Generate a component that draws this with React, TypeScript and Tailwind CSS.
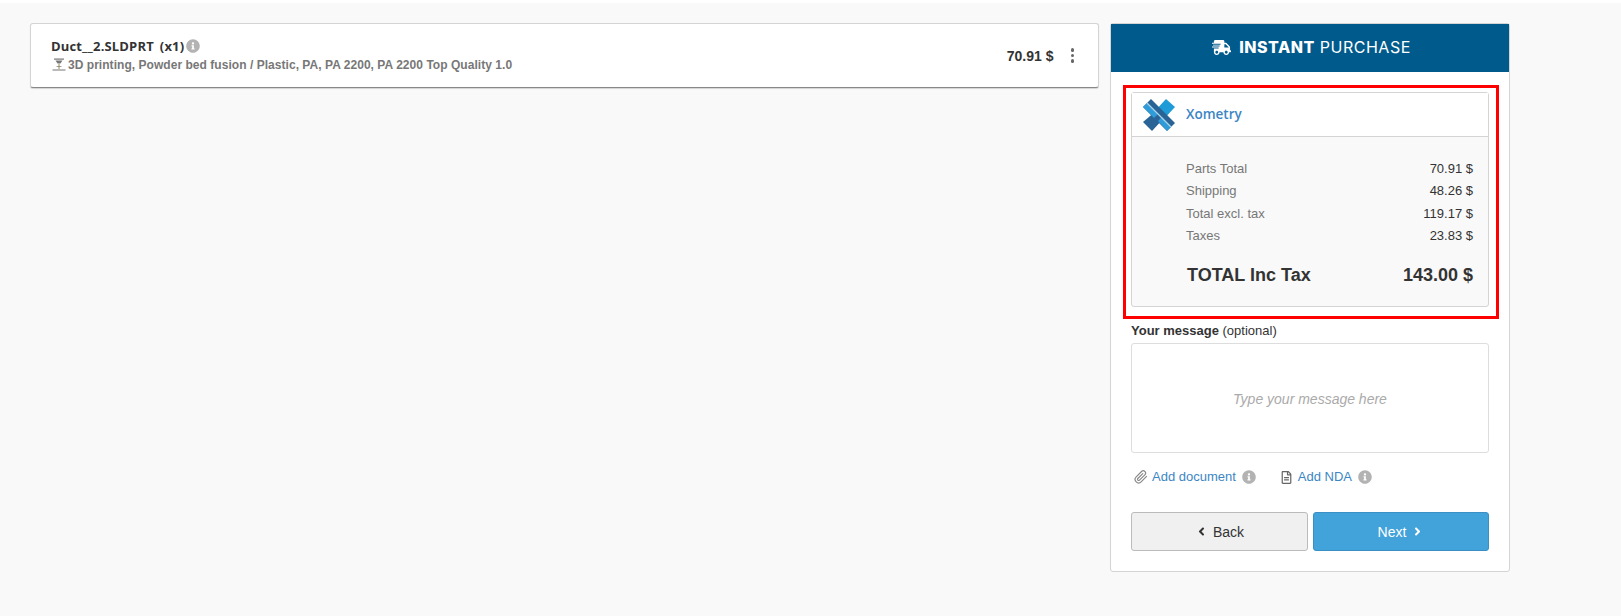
import React from 'react';
import { FaShippingFast, FaInfoCircle, FaRegFileAlt, FaAngleLeft, FaAngleRight } from 'react-icons/fa';
import { FiPaperclip } from 'react-icons/fi';

const rows = [
  { label: 'Parts Total', value: '70.91 $' },
  { label: 'Shipping', value: '48.26 $' },
  { label: 'Total excl. tax', value: '119.17 $' },
  { label: 'Taxes', value: '23.83 $' },
];

const XometryLogo = () => (
  <svg width="32" height="32" viewBox="0 0 32 32">
    <path d="M23 0 L32 8 L20 21 L11 13 Z" fill="#1f9bd7" />
    <path d="M13 12 L0 23 L9 32 L21 19 Z" fill="#2a6496" />
    <path d="M8 0 L32 24 L24 32 L0 8 Z" fill="#2a6496" />
    <path d="M0 8 L4 4 L15 15 L11 19 Z" fill="#2f9bd8" />
    <path d="M24 32 L28 28 L19 18 L15 22 Z" fill="#2f9bd8" />
    <path d="M4 4 L28 28" stroke="#a9d4ea" strokeWidth="1.2" />
  </svg>
);

const PrinterIcon = () => (
  <svg width="14" height="14" viewBox="0 0 14 14" fill="#777">
    <rect x="2" y="0.5" width="10" height="1.2" />
    <path d="M3.5 2.5 H10.5 L8.5 5.5 H5.5 Z" />
    <rect x="6.5" y="6" width="1" height="5" fill="#a08a50" />
    <rect x="4.5" y="8" width="5" height="0.7" />
    <rect x="0.5" y="11.5" width="13" height="1" />
  </svg>
);

export default function App() {
  return (
    <div className="h-screen bg-[#f9f9f9] font-['Liberation_Sans',sans-serif]">
      <div className="h-[3px] bg-white" />
      <div className="flex items-start pt-5 pl-[30px]">
        <div className="flex h-[65px] w-[1069px] items-center justify-between rounded-[3px] border border-[#d4d4d4] border-b-[#888] bg-white pl-[20px] pr-[24px] shadow-[0_1px_1px_rgba(0,0,0,0.15)]">
          <div>
            <div className="flex items-center text-[13px] leading-[18px] font-bold tracking-[0.15px] text-[#333] font-['Open_Sans',sans-serif]">
              <span>Duct__2.SLDPRT</span>
              <span className="ml-[6px]">(x1)</span>
              <FaInfoCircle className="ml-[2px] text-[14px] text-[#b3b3b3]" />
            </div>
            <div className="mt-px flex items-center pl-px text-xs leading-[18px] font-bold tracking-[0.04px] text-[#777]">
              <PrinterIcon />
              <span className="ml-[2px]">3D printing, Powder bed fusion / Plastic, PA, PA 2200, PA 2200 Top Quality 1.0</span>
            </div>
          </div>
          <div className="flex items-center">
            <span className="text-sm font-bold text-[#333]">70.91 $</span>
            <span className="ml-[17px] flex flex-col gap-[2px]">
              <span className="size-[3.5px] rounded-full bg-[#666]" />
              <span className="size-[3.5px] rounded-full bg-[#666]" />
              <span className="size-[3.5px] rounded-full bg-[#666]" />
            </span>
          </div>
        </div>

        <div className="ml-[11px] h-[549px] w-[400px] rounded-[3px] border border-[#d4d4d4] bg-white">
          <div className="flex h-[48px] items-center justify-center bg-[#005a8b] pb-[2px] pl-[3px] text-base tracking-[0.5px] text-white font-['Inter',sans-serif]">
            <FaShippingFast className="mr-[8px] text-[19px]" />
            <span className="font-extrabold">INSTANT</span>
            <span className="ml-[5px] font-normal">PURCHASE</span>
          </div>

          <div className="mt-[13px] mr-[10px] ml-[12px] border-[3px] border-[#ff0000] pt-[4px] pr-[7px] pb-[9px] pl-[5px]">
            <div className="rounded-[3px] border border-[#d4d4d4] bg-[#f9f9f9]">
              <div className="flex h-[44px] items-center border-b border-[#d4d4d4] bg-white pl-[11px]">
                <XometryLogo />
                <span className="ml-[11px] text-[13.5px] font-semibold text-[#3c86c4] font-['Open_Sans',sans-serif]">Xometry</span>
              </div>
              <div className="pl-[54px] pr-[15px] pt-[20px] pb-[19px]">
                {rows.map((r) => (
                  <div key={r.label} className="flex h-[22.5px] items-center justify-between text-[13px]">
                    <span className="text-[#777]">{r.label}</span>
                    <span className="text-[#333]">{r.value}</span>
                  </div>
                ))}
                <div className="mt-[16px] ml-px flex h-[24px] items-center justify-between text-lg font-bold text-[#333]">
                  <span>TOTAL Inc Tax</span>
                  <span>143.00 $</span>
                </div>
              </div>
            </div>
          </div>

          <div className="mx-[20px] mt-[3px]">
            <div className="text-[13px] leading-[18px] text-[#333]">
              <span className="font-bold">Your message</span> (optional)
            </div>
            <div className="mt-[3px] flex h-[110px] items-center justify-center rounded-[3px] border border-[#ddd] bg-white pt-[2px] text-sm text-[#aaa] italic">
              Type your message here
            </div>
            <div className="mt-[14px] flex h-[20px] items-center pl-[3px] text-[13px] text-[#3c86c4]">
              <FiPaperclip className="text-[14px] text-[#888]" />
              <span className="ml-[4px]">Add document</span>
              <FaInfoCircle className="ml-[6px] text-[14px] text-[#b3b3b3]" />
              <FaRegFileAlt className="ml-[24px] text-[13px] text-[#666]" />
              <span className="ml-[5px]">Add NDA</span>
              <FaInfoCircle className="ml-[6px] text-[14px] text-[#b3b3b3]" />
            </div>
            <div className="mt-[25px] flex justify-between">
              <button className="flex h-[39px] w-[177px] items-center justify-center rounded-[3px] border border-[#bbb] bg-[#f0f0f0] text-sm text-[#333]">
                <FaAngleLeft className="mr-[5px] text-[13px]" />
                Back
              </button>
              <button className="flex h-[39px] w-[176px] items-center justify-center rounded-[3px] border border-[#3a8fc4] bg-[#42a2da] text-sm text-white">
                Next
                <FaAngleRight className="ml-[5px] text-[13px]" />
              </button>
            </div>
          </div>
        </div>
      </div>
    </div>
  );
}
